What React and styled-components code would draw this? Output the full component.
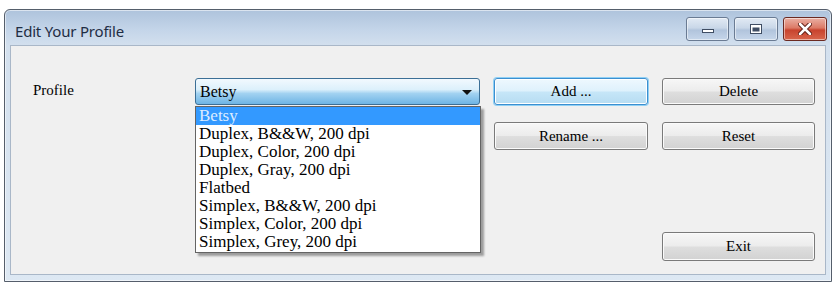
import React from 'react';
import styled, { createGlobalStyle } from 'styled-components';

const GlobalStyle = createGlobalStyle`
    html, body {
        margin: 0;
        padding: 0;
        background: #ffffff;
    }
    body {
        width: 837px;
        height: 285px;
        overflow: hidden;
    }
`;

const Page = styled.div`
    padding: 9px 5px 0 4px;
`;

const Window = styled.div`
    width: 828px;
    box-sizing: border-box;
    border: 1px solid #555e6b;
    border-radius: 6px 6px 0 0;
    background: linear-gradient(to bottom, #aec3dc 0px, #c4d5e9 20px, #d3e0ee 36px, #dde8f3 100%);
    padding: 0 5px 6px 5px;
    box-shadow: inset 0 0 0 1px rgba(255, 255, 255, 0.55);
`;

const TitleBar = styled.div`
    height: 35px;
    display: flex;
    align-items: flex-start;
    justify-content: space-between;
`;

const Title = styled.div`
    font-family: 'Noto Sans', 'Open Sans', sans-serif;
    font-size: 15px;
    color: #1f2d44;
    padding: 11px 0 0 5px;
    letter-spacing: -0.2px;
`;

const Controls = styled.div`
    display: flex;
    gap: 5px;
    margin-top: 7px;
    margin-right: -1px;
`;

const CtrlButton = styled.div`
    width: ${(p) => p.$w}px;
    height: 24px;
    box-sizing: border-box;
    border: 1px solid ${(p) => (p.$close ? '#6b2a22' : '#6a7b93')};
    border-radius: 3px;
    display: flex;
    align-items: center;
    justify-content: center;
    background: ${(p) =>
        p.$close
            ? 'linear-gradient(to bottom, #eab0a4 0%, #dc7a66 45%, #c8432e 55%, #d8664c 100%)'
            : 'linear-gradient(to bottom, #e2eaf4 0%, #c9d7e8 45%, #b1c4dc 55%, #c6d6ea 100%)'};
    box-shadow: inset 0 0 0 1px rgba(255, 255, 255, 0.5);
`;

const Body = styled.div`
    height: 230px;
    box-sizing: border-box;
    background: #f0f0f0;
    border: 1px solid #a9b7c8;
    padding: 32px 0 13px 22px;
    display: grid;
    grid-template-columns: 148px 285px 154px 153px;
    grid-template-rows: 27px 28px 1fr;
    column-gap: 14px;
    row-gap: 17px;
`;

const Label = styled.div`
    font-family: 'Liberation Serif', serif;
    font-size: 15px;
    color: #000;
    align-self: center;
    margin-top: -2px;
`;

const ComboWrap = styled.div`
    position: relative;
`;

const Combo = styled.div`
    height: 27px;
    box-sizing: border-box;
    border: 1px solid #3c6f96;
    border-radius: 3px;
    background: linear-gradient(to bottom, #f2f9fe 0%, #dcf0fb 42%, #a2d2f1 58%, #6eb4e4 100%);
    display: flex;
    align-items: center;
    justify-content: space-between;
    padding: 0 7px 0 4px;
    font-family: 'Liberation Serif', serif;
    font-size: 16px;
    color: #000;
`;

const Arrow = styled.span`
    width: 0;
    height: 0;
    border-left: 5px solid transparent;
    border-right: 5px solid transparent;
    border-top: 5px solid #111;
    margin-top: 2px;
`;

const List = styled.ul`
    position: absolute;
    top: 28px;
    left: 0;
    width: 286px;
    box-sizing: border-box;
    margin: 0;
    padding: 0 0 1px 0;
    list-style: none;
    background: #ffffff;
    border: 1px solid #646464;
    box-shadow: 3px 3px 2px rgba(0, 0, 0, 0.35);
    z-index: 5;
`;

const Item = styled.li`
    height: 18px;
    line-height: 17px;
    padding-left: 3px;
    font-family: 'Liberation Serif', serif;
    font-size: 17px;
    color: ${(p) => (p.$selected ? '#dcecff' : '#000')};
    background: ${(p) => (p.$selected ? '#3399ff' : 'transparent')};
    white-space: nowrap;
`;

const Button = styled.div`
    box-sizing: border-box;
    border: 1px solid ${(p) => (p.$focus ? '#3c8fd0' : '#7a7a7a')};
    border-radius: 3px;
    background: ${(p) =>
        p.$focus
            ? 'linear-gradient(to bottom, #eef8fe 0%, #def1fc 48%, #c6e6f8 52%, #b6dcf2 100%)'
            : 'linear-gradient(to bottom, #f7f7f7 0%, #ececec 48%, #dedede 52%, #d2d2d2 100%)'};
    box-shadow: ${(p) =>
        p.$focus ? '0 0 0 1px #8fd0f5, inset 0 0 0 1px #ffffff' : 'inset 0 0 0 1px #fbfbfb'};
    display: flex;
    align-items: center;
    justify-content: center;
    font-family: 'Liberation Serif', serif;
    font-size: 15px;
    color: #000;
    grid-column: ${(p) => p.$col};
    grid-row: ${(p) => p.$row};
    align-self: ${(p) => (p.$bottom ? 'end' : 'stretch')};
    height: ${(p) => (p.$bottom ? '29px' : 'auto')};
`;

const items = [
    'Betsy',
    'Duplex, B&&W, 200 dpi',
    'Duplex, Color, 200 dpi',
    'Duplex, Gray, 200 dpi',
    'Flatbed',
    'Simplex, B&&W, 200 dpi',
    'Simplex, Color, 200 dpi',
    'Simplex, Grey, 200 dpi',
];

function App() {
    return (
        <>
            <GlobalStyle />
            <Page>
                <Window>
                    <TitleBar>
                        <Title>Edit Your Profile</Title>
                        <Controls>
                            <CtrlButton $w={43}>
                                <svg width="12" height="10" viewBox="0 0 12 10">
                                    <rect x="0.5" y="5.5" width="11" height="3" fill="#ffffff" stroke="#3f4d63" />
                                </svg>
                            </CtrlButton>
                            <CtrlButton $w={44}>
                                <svg width="12" height="10" viewBox="0 0 12 10">
                                    <rect x="0.5" y="0.5" width="11" height="9" fill="#ffffff" stroke="#3f4d63" />
                                    <rect x="2.5" y="3.5" width="7" height="4" fill="#3f4d63" />
                                </svg>
                            </CtrlButton>
                            <CtrlButton $w={44} $close>
                                <svg width="14" height="12" viewBox="0 0 14 12">
                                    <path d="M2 1 L12 11 M12 1 L2 11" stroke="#5a1b12" strokeWidth="4.5" strokeLinecap="round" />
                                    <path d="M2 1 L12 11 M12 1 L2 11" stroke="#ffffff" strokeWidth="2.5" strokeLinecap="round" />
                                </svg>
                            </CtrlButton>
                        </Controls>
                    </TitleBar>
                    <Body>
                        <Label>Profile</Label>
                        <ComboWrap>
                            <Combo>
                                <span>Betsy</span>
                                <Arrow />
                            </Combo>
                            <List>
                                {items.map((it, i) => (
                                    <Item key={it} $selected={i === 0}>{it}</Item>
                                ))}
                            </List>
                        </ComboWrap>
                        <Button $focus $col={3} $row={1}>Add ...</Button>
                        <Button $col={4} $row={1}>Delete</Button>
                        <Button $col={3} $row={2}>Rename ...</Button>
                        <Button $col={4} $row={2}>Reset</Button>
                        <Button $col={4} $row={3} $bottom>Exit</Button>
                    </Body>
                </Window>
            </Page>
        </>
    );
}

export default App;
